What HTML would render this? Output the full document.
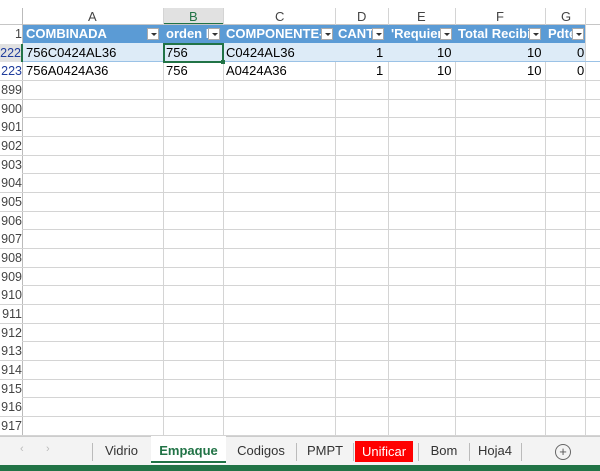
<!DOCTYPE html><html><head><style>
body{margin:0;width:600px;height:471px;overflow:hidden;background:#fff;font-family:"Liberation Sans",sans-serif;font-size:13px;position:relative}
.a{position:absolute}
.gridv{position:absolute;top:8px;height:427px;width:1px;background:#d4d4d4}
.r{position:absolute;left:0;width:600px;height:18.67px;border-bottom:1px solid #d4d4d4;box-sizing:border-box}
.rh{position:absolute;left:0;width:22px;text-align:right;color:#444;line-height:18px;background:#fff;font-size:12.5px}
.c{position:absolute;line-height:18px;white-space:nowrap;overflow:hidden}
.h{color:#fff;font-weight:bold}
.dd{position:absolute;top:3px;width:12px;height:12px;background:#fff;border:1px solid #aaa;box-sizing:border-box}
.dd:after{content:"";position:absolute;left:3px;top:4px;border:3px solid transparent;border-top:3px solid #333}
.tab{position:absolute;top:438px;height:26px;line-height:26px;text-align:center;color:#333;font-size:13px}
.sep{position:absolute;top:443px;width:1px;height:18px;background:#bbb}
</style></head><body>
<div class="a" style="left:0;top:0;width:600px;height:25px;background:#fff"></div>
<div class="a" style="left:163px;top:8px;width:60px;height:17px;background:#e1e1e1;border-bottom:2px solid #217346;box-sizing:border-box"></div>
<div class="a" style="top:8px;left:0;width:600px;height:17px;line-height:17px;color:#444;font-size:13px">
<span class="a" style="left:88px">A</span><span class="a" style="left:189px;color:#217346">B</span><span class="a" style="left:275px">C</span><span class="a" style="left:357px">D</span><span class="a" style="left:417px">E</span><span class="a" style="left:496px">F</span><span class="a" style="left:561px">G</span></div>
<div class="a" style="left:0;top:24px;width:600px;height:1px;background:#c6c6c6"></div>
<div class="gridv" style="left:22px;background:#bbb"></div>
<div class="gridv" style="left:163px"></div><div class="gridv" style="left:223px"></div><div class="gridv" style="left:335px"></div><div class="gridv" style="left:388px"></div><div class="gridv" style="left:455px"></div><div class="gridv" style="left:545px"></div><div class="gridv" style="left:585px"></div>
<div class="a" style="left:23px;top:25px;width:562px;height:18px;background:#5b9bd5"></div>
<div class="a" style="left:23px;top:43px;width:562px;height:19px;background:#ddebf7"></div>
<div class="r" style="top:25px;border:none"><div class="rh" style="line-height:19px">1</div>
<div class="c h" style="left:26px">COMBINADA</div><div class="dd" style="left:147px"></div>
<div class="c h" style="left:166px;width:44px">orden N</div><div class="dd" style="left:208px"></div>
<div class="c h" style="left:226px;width:96px">COMPONENTE-A</div><div class="dd" style="left:321px"></div>
<div class="c h" style="left:338px;width:34px">CANT</div><div class="dd" style="left:372px"></div>
<div class="c h" style="left:391px;width:50px">'Requier</div><div class="dd" style="left:440px"></div>
<div class="c h" style="left:458px;width:72px">Total Recibi</div><div class="dd" style="left:529px"></div>
<div class="c h" style="left:548px;width:25px">Pdte</div><div class="dd" style="left:572px"></div></div>
<div class="r" style="top:43.7px;border-bottom-color:#9bc2e6"><div class="rh" style="color:#1f3c9c;background:#e1e1e1;border-right:2px solid #217346;width:21px">222</div>
<div class="c" style="left:26px">756C0424AL36</div><div class="c" style="left:166px">756</div><div class="c" style="left:226px">C0424AL36</div>
<div class="c" style="left:376px">1</div><div class="c" style="left:437px">10</div><div class="c" style="left:527px">10</div><div class="c" style="left:577px">0</div></div>
<div class="a" style="left:163px;top:43px;width:61px;height:20px;border:2px solid #217346;box-sizing:border-box"></div>
<div class="a" style="left:221px;top:60px;width:4px;height:4px;background:#217346"></div>
<div class="r" style="top:62.3px"><div class="rh" style="color:#1f3c9c">223</div>
<div class="c" style="left:26px">756A0424A36</div><div class="c" style="left:166px">756</div><div class="c" style="left:226px">A0424A36</div>
<div class="c" style="left:376px">1</div><div class="c" style="left:437px">10</div><div class="c" style="left:527px">10</div><div class="c" style="left:577px">0</div></div>
<div class="r" style="top:81px"><div class="rh">899</div></div>
<div class="r" style="top:99.7px"><div class="rh">900</div></div>
<div class="r" style="top:118.3px"><div class="rh">901</div></div>
<div class="r" style="top:137px"><div class="rh">902</div></div>
<div class="r" style="top:155.7px"><div class="rh">903</div></div>
<div class="r" style="top:174.3px"><div class="rh">904</div></div>
<div class="r" style="top:193px"><div class="rh">905</div></div>
<div class="r" style="top:211.7px"><div class="rh">906</div></div>
<div class="r" style="top:230.3px"><div class="rh">907</div></div>
<div class="r" style="top:249px"><div class="rh">908</div></div>
<div class="r" style="top:267.7px"><div class="rh">909</div></div>
<div class="r" style="top:286.3px"><div class="rh">910</div></div>
<div class="r" style="top:305px"><div class="rh">911</div></div>
<div class="r" style="top:323.7px"><div class="rh">912</div></div>
<div class="r" style="top:342.3px"><div class="rh">913</div></div>
<div class="r" style="top:361px"><div class="rh">914</div></div>
<div class="r" style="top:379.7px"><div class="rh">915</div></div>
<div class="r" style="top:398.3px"><div class="rh">916</div></div>
<div class="r" style="top:417px"><div class="rh">917</div></div>
<div class="a" style="left:0;top:436px;width:600px;height:29px;background:#f3f3f3;border-top:1px solid #ccc"></div>
<div class="a" style="left:20px;top:443px;color:#bbb;font-size:11px">&#8249;</div><div class="a" style="left:46px;top:443px;color:#bbb;font-size:11px">&#8250;</div>
<div class="sep" style="left:92px"></div>
<div class="tab" style="left:93px;width:57px">Vidrio</div>
<div class="tab" style="left:151px;width:75px;background:#fff;color:#217346;font-weight:bold;top:436px;height:28px;line-height:30px"><span style="border-bottom:2px solid #217346;padding:0 8px 3px">Empaque</span></div>
<div class="tab" style="left:226px;width:70px">Codigos</div>
<div class="sep" style="left:296px"></div>
<div class="tab" style="left:297px;width:56px">PMPT</div>
<div class="sep" style="left:353px"></div>
<div class="tab" style="left:355px;top:441px;height:21px;line-height:21px;width:58px;background:#f00;color:#fff">Unificar</div>
<div class="sep" style="left:418px"></div>
<div class="tab" style="left:419px;width:50px">Bom</div>
<div class="sep" style="left:469px"></div>
<div class="tab" style="left:470px;width:50px">Hoja4</div>
<div class="sep" style="left:521px"></div>
<div class="a" style="left:555px;top:444px;width:14px;height:14px;border:1px solid #666;border-radius:50%;text-align:center;line-height:14px;font-size:13px;color:#555">+</div>
<div class="a" style="left:0;top:465px;width:600px;height:6px;background:#217346"></div>
</body></html>
